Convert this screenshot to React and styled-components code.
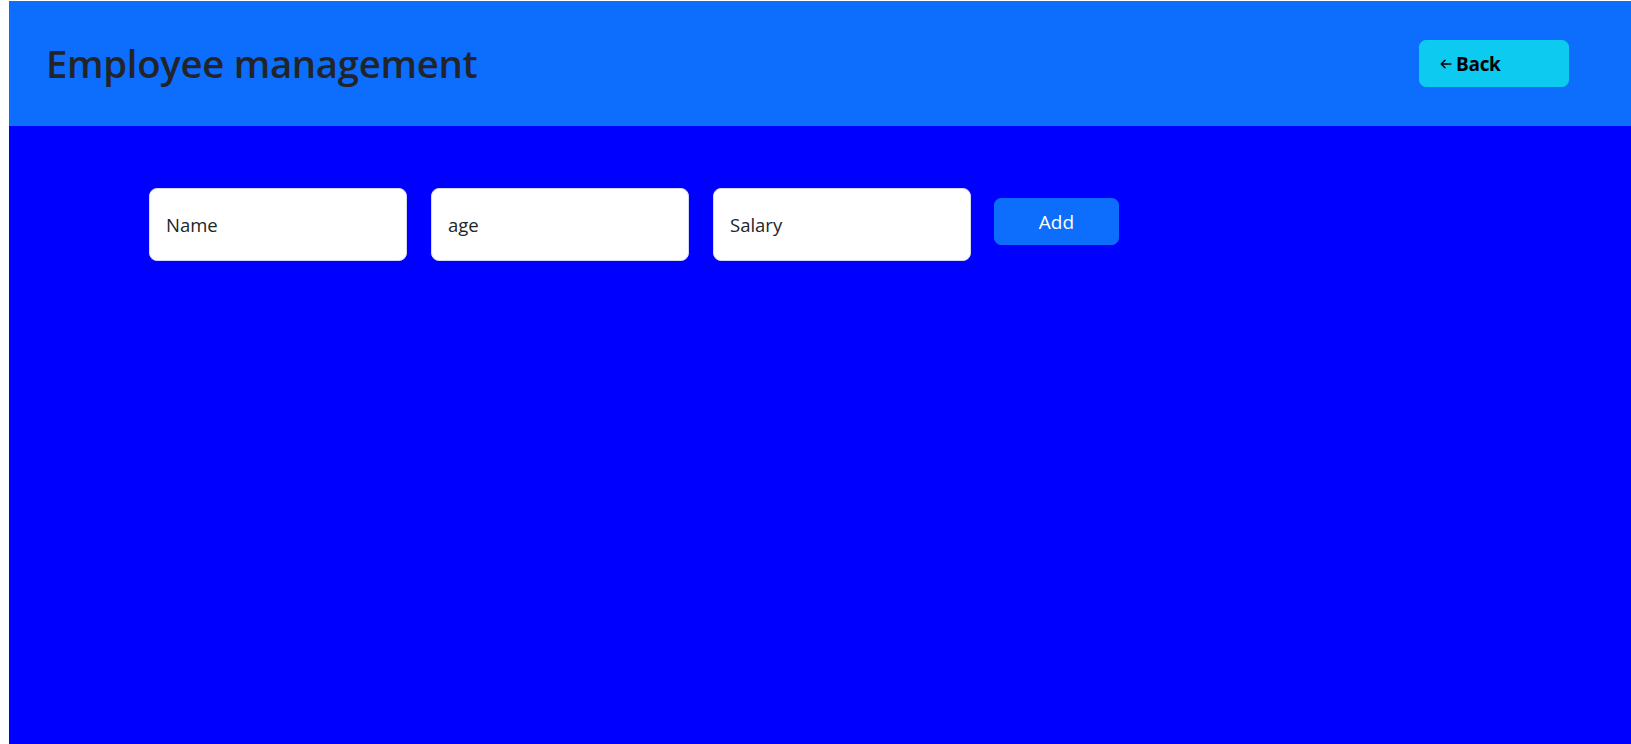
import React from "react";
import styled, { createGlobalStyle } from "styled-components";

const GlobalStyle = createGlobalStyle`
  * { box-sizing: border-box; }
  html, body { height: 100%; }
  body {
    margin: 1px 0 0 9px;
    font-family: "Open Sans", "Noto Sans", sans-serif;
    color: #212529;
    background: #ffffff;
    overflow: hidden;
  }
  #root { min-height: 100%; display: flex; flex-direction: column; }
`;

const Page = styled.div`
  flex: 1;
  display: flex;
  flex-direction: column;
  min-height: 743px;
`;

const Header = styled.header`
  height: 125px;
  background: #0d6efd;
  display: flex;
  align-items: center;
  justify-content: space-between;
  padding: 0 62px 0 37px;
`;

const Title = styled.h1`
  margin: 0;
  font-size: 38.3px;
  font-weight: 600;
  line-height: 1.2;
  color: #212529;
  letter-spacing: -0.3px;
`;

const BackButton = styled.button`
  width: 150px;
  height: 47px;
  display: flex;
  align-items: center;
  gap: 4px;
  padding: 0 0 0 20px;
  border: 1px solid #0dcaf0;
  border-radius: 7px;
  background: #0dcaf0;
  color: #000;
  font-family: inherit;
  font-size: 19px;
  font-weight: 700;
  letter-spacing: -0.3px;
  cursor: pointer;
`;

const Main = styled.main`
  flex: 1;
  background: #0000ff;
  padding: 62px 0 0 140px;
`;

const Form = styled.form`
  display: flex;
  align-items: flex-start;
  gap: 24px;
`;

const Field = styled.input`
  width: 258px;
  height: 73px;
  padding: 0 16px;
  border: 1px solid #d6d9ee;
  border-radius: 8px;
  background: #fff;
  font-family: inherit;
  font-size: 18.5px;
  color: #212529;
  outline: none;
  &::placeholder { color: #212529; opacity: 1; }
`;

const AddButton = styled.button`
  margin-top: 10px;
  margin-left: -1px;
  width: 125px;
  height: 47px;
  border: 1px solid #0d6efd;
  border-radius: 7px;
  background: #0d6efd;
  color: #fff;
  font-family: inherit;
  font-size: 19px;
  font-weight: 400;
  cursor: pointer;
`;

const ArrowLeft = () => (
  <svg width="12" height="10" viewBox="0 0 12 10" fill="none" stroke="#000" strokeWidth="1.4" strokeLinecap="round" strokeLinejoin="round">
    <path d="M11 5H1.5M5 1.2L1.2 5 5 8.8" />
  </svg>
);

export default function App() {
  return (
    <Page>
      <GlobalStyle />
      <Header>
        <Title>Employee management</Title>
        <BackButton type="button">
          <ArrowLeft />
          Back
        </BackButton>
      </Header>
      <Main>
        <Form onSubmit={(e) => e.preventDefault()}>
          <Field placeholder="Name" />
          <Field placeholder="age" />
          <Field placeholder="Salary" />
          <AddButton type="submit">Add</AddButton>
        </Form>
      </Main>
    </Page>
  );
}
